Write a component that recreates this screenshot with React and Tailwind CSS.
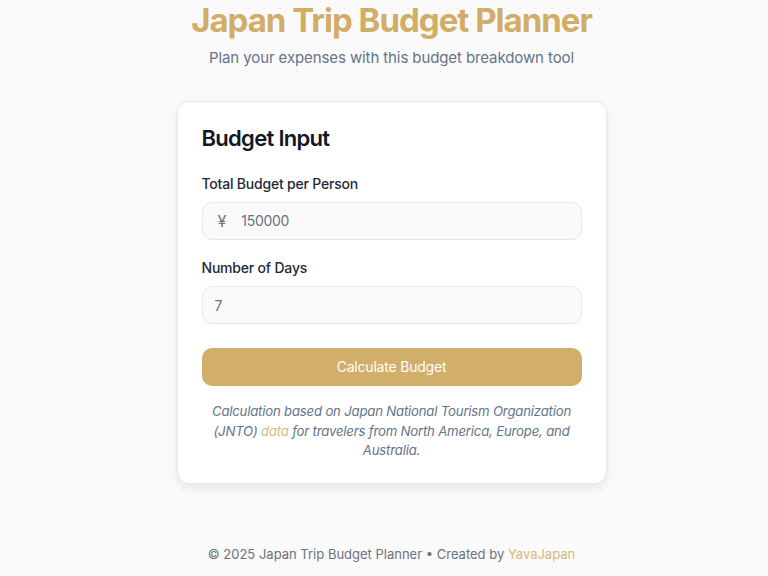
import React, { useState } from "react";

export default function App() {
  const [budget, setBudget] = useState("150000");
  const [days, setDays] = useState("7");

  return (
    <div
      className="min-h-screen w-full bg-[#fafafa] bg-[radial-gradient(#efe9de_1px,transparent_1.2px)] bg-[size:16px_16px] text-[#1f2937]"
      style={{ fontFamily: "Inter, 'Noto Sans', sans-serif" }}
    >
      <div className="flex flex-col items-center pl-[15px]">
        {/* Header */}
        <h1 className="text-[33px] leading-10 font-bold tracking-[-1px] text-[#d1ad68]">
          Japan Trip Budget Planner
        </h1>
        <p className="mt-1.5 text-[15px] leading-6 tracking-[-0.1px] text-[#64748b]">
          Plan your expenses with this budget breakdown tool
        </p>

        {/* Budget card */}
        <div className="mt-[31px] w-[430px] rounded-xl border border-[#e5e7eb] bg-white px-6 pt-5 pb-[22px] shadow-[0_4px_10px_rgba(0,0,0,0.08)]">
          <h2 className="text-[22px] leading-8 font-semibold text-[#111827] tracking-[-0.7px]">
            Budget Input
          </h2>

          <label className="mt-5 block text-sm leading-5 font-medium tracking-[-0.2px] text-[#1f2937]">
            Total Budget per Person
          </label>
          <div className="mt-2 flex h-[38px] items-center rounded-[10px] border border-[#e5e7eb] bg-[#fafafa] pl-[15px]">
            <span className="text-base text-[#6b7280]">¥</span>
            <input
              value={budget}
              onChange={(e) => setBudget(e.target.value)}
              className="ml-[15px] flex-1 bg-transparent text-sm tracking-[-0.3px] text-[#6b7280] outline-none"
            />
          </div>

          <label className="mt-[18px] block text-sm leading-5 font-medium tracking-[-0.2px] text-[#1f2937]">
            Number of Days
          </label>
          <input
            value={days}
            onChange={(e) => setDays(e.target.value)}
            className="mt-2 block h-[38px] w-full rounded-[10px] border border-[#e5e7eb] bg-[#fafafa] px-3 text-sm text-[#6b7280] outline-none"
          />

          <button className="mt-6 h-[38px] w-full rounded-[10px] bg-[#d2ae6b] text-sm tracking-[-0.2px] text-white">
            Calculate Budget
          </button>

          <p className="mt-4 text-center text-[13.2px] leading-[19.5px] tracking-[-0.2px] italic text-[#64748b]">
            Calculation based on Japan National Tourism Organization (JNTO){" "}
            <a href="#" className="text-[#d8b97f]">data</a> for travelers from
            North America, Europe, and Australia.
          </p>
        </div>

        {/* Footer */}
        <p className="mt-[60px] text-[13px] leading-5 text-[#6b7280]">
          © 2025 Japan Trip Budget Planner • Created by{" "}
          <a href="#" className="text-[#d8b97f]">YavaJapan</a>
        </p>
      </div>
    </div>
  );
}
